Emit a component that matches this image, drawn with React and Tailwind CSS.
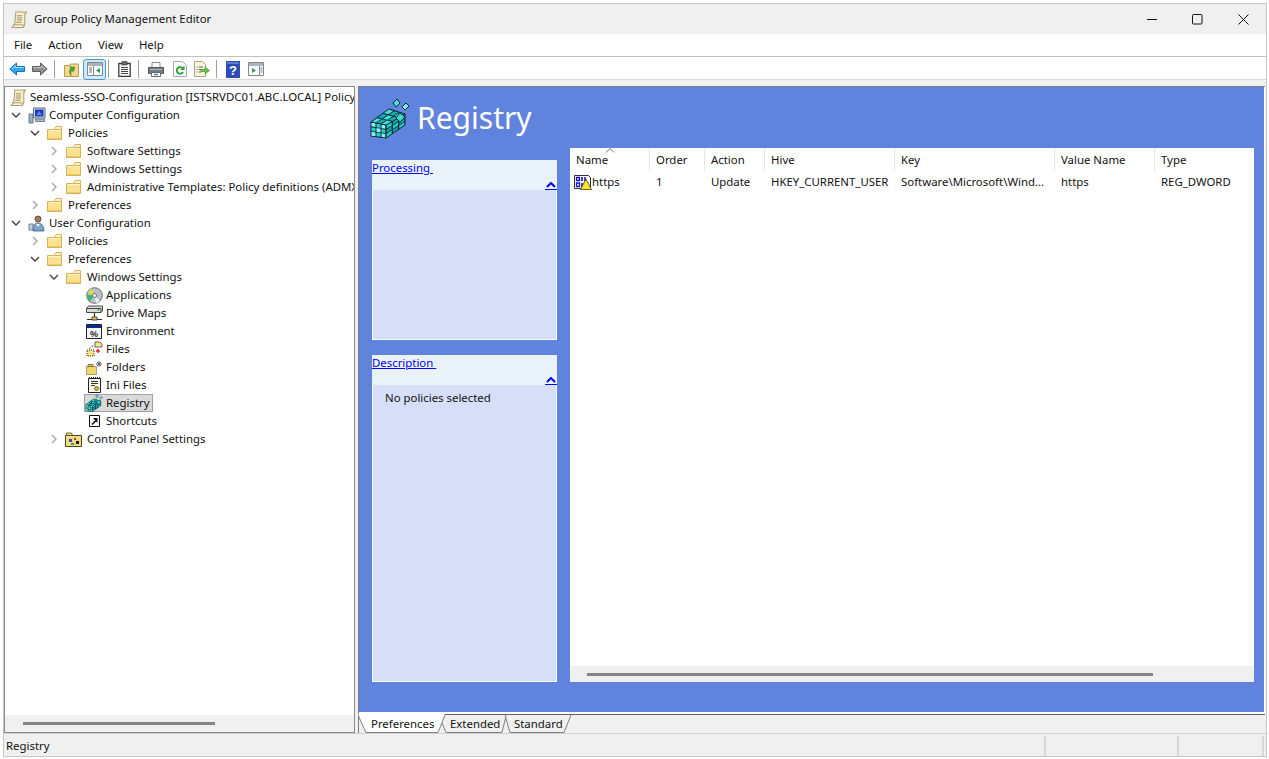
const FONT = "font-['Noto_Sans','Open_Sans',sans-serif]";

function Folder() {
  return (
    <svg width="15" height="14" viewBox="0 0 15 14" className="-translate-x-[2px]">
      <path d="M.5 3.500h14v10H.5z" fill="#fce28f" stroke="#d6b25c" />
      <path d="M7.500 2.500 9 .5h5.500v3h-7z" fill="#fdf0c4" stroke="#d6b25c" />
      <path d="M1.500 4.500h12" stroke="#fff3cc" />
      <path d="M1 12.500h13" stroke="#eec96c" />
    </svg>
  );
}

function Scroll({ size = 17 }) {
  return (
    <svg width={size} height={size} viewBox="0 0 16 16">
      <path d="M4.500 1h10l-1.500 2.500v9.500l-2 2.500H1l2.500-3z" fill="#fbf0c6" stroke="#ab9f7a" />
      <path d="M11 15.500c1.500-.5 1.500-2 0-2.500H2" fill="none" stroke="#ab9f7a" />
      <path d="M5.500 4.500h5M5.500 6.500h5M5.500 8.500h5M5 10.500h5" stroke="#98916f" />
      <path d="M11.500 1.500c1.500.5 1.500 2 1 2.500" fill="none" stroke="#d8c47e" />
    </svg>
  );
}

function Computer() {
  return (
    <svg width="18" height="17" viewBox="0 0 18 17">
      <path d="M1 7h4v9H1z" fill="#9bb2c4" stroke="#4d6474" strokeWidth=".8" />
      <path d="M5.500 1h11.500v10H5.500z" fill="#d3dbe2" stroke="#5a6b78" />
      <path d="M7 2.500h8.500v7H7z" fill="#1c38c0" />
      <path d="M8 8l3-4 3 4z" fill="#5f86ee" />
      <path d="M7.500 12h9v2.500h-9z" fill="#aebdc9" stroke="#5a6b78" strokeWidth=".8" />
    </svg>
  );
}

function UserIcon() {
  return (
    <svg width="18" height="17" viewBox="0 0 18 17">
      <circle cx="10" cy="4" r="3" fill="#a87a58" stroke="#4d3a30" strokeWidth=".8" />
      <path d="M5 16c-.5-5 1.500-8 5-8s6 3 6 8z" fill="#7aa4cc" stroke="#41607c" strokeWidth=".8" />
      <path d="M1 9h4v6H1z" fill="#c5d3de" stroke="#52697c" strokeWidth=".8" />
      <path d="M8 9l2 3 2-3" fill="#f4f7fa" />
    </svg>
  );
}

function Disc() {
  return (
    <svg width="17" height="17" viewBox="0 0 17 17">
      <circle cx="8.500" cy="8.500" r="7.800" fill="#b9bfc2" stroke="#6a7074" />
      <path d="M8.500 8.500 2 5a7.500 7.500 0 0 1 4-3.500z" fill="#d8e04a" />
      <path d="M8.500 8.500 4 14a7.500 7.500 0 0 1-3-6z" fill="#39b66a" />
      <path d="M8.500 8.500 14 14a7.500 7.500 0 0 1-4 2z" fill="#e9eef0" />
      <circle cx="8.500" cy="8.500" r="2" fill="#fff" stroke="#555" strokeWidth=".8" />
    </svg>
  );
}

function DriveMap() {
  return (
    <svg width="17" height="16" viewBox="0 0 17 16">
      <path d="M.5 3.500 2.500 1h14v5l-1.500 1.500H.5z" fill="#d8d8d8" stroke="#4a4a4a" />
      <path d="M.5 3.500H15V7.500" fill="none" stroke="#4a4a4a" />
      <path d="M11.500 5h2" stroke="#23b04c" strokeWidth="1.400" />
      <path d="M8.500 8v4M1 14.500h15" stroke="#333" strokeWidth="1.200" />
      <path d="M6 12h5v3H6z" fill="#e0c040" stroke="#333" strokeWidth=".8" />
    </svg>
  );
}

function EnvIcon() {
  return (
    <svg width="16" height="15" viewBox="0 0 16 15">
      <path d="M.5.500h15v14H.5z" fill="#f6f6f6" stroke="#222" />
      <path d="M1 1h14v3H1z" fill="#0c2a8c" />
      <text x="8" y="12.500" textAnchor="middle" fontSize="9" fontWeight="700" fill="#222" fontFamily="Liberation Sans">%</text>
    </svg>
  );
}

function FilesIcon() {
  return (
    <svg width="18" height="16" viewBox="0 0 18 16">
      <path d="M10 1h5l2 2v3h-7z" fill="#f7e58a" stroke="#444" strokeWidth=".8" />
      <path d="M2 9h7v6H2z" fill="#f4e27a" stroke="#333" strokeDasharray="1 1" />
      <path d="M4 8l5-4" stroke="#333" strokeDasharray="1 1" />
      <path d="M11 10h4M13 8v4" stroke="#e8202c" strokeWidth="1.400" />
    </svg>
  );
}

function FoldersIcon() {
  return (
    <svg width="17" height="15" viewBox="0 0 17 15">
      <path d="M.5 6.500h10v8H.5z" fill="#ecd768" stroke="#5f5a30" strokeDasharray="1 1" />
      <path d="M2 4.500h5v2H2z" fill="#ecd768" stroke="#5f5a30" strokeWidth=".8" />
      <path d="M13 1v6M10 4h6M11 2l4 4M15 2l-4 4" stroke="#555" strokeWidth=".9" />
    </svg>
  );
}

function IniIcon() {
  return (
    <svg width="13" height="16" viewBox="0 0 13 16">
      <path d="M.5 1.500h12v14H.5z" fill="#fbfbf0" stroke="#222" />
      <path d="M1 .500h11" stroke="#222" strokeDasharray="1 1" />
      <path d="M3 4.500h7M3 6.500h7M3 8.500h4" stroke="#333" />
      <circle cx="8.500" cy="11.500" r="2" fill="#d6b422" stroke="#554a10" strokeWidth=".7" />
    </svg>
  );
}

function ShortcutIcon() {
  return (
    <svg width="11" height="12" viewBox="0 0 11 12">
      <path d="M.5.500h10v11H.5z" fill="#fff" stroke="#111" />
      <path d="M3 9.500 7 5.500" stroke="#111" strokeWidth="1.600" />
      <path d="M4 3h4.500v5z" fill="#111" />
    </svg>
  );
}

function ControlPanel() {
  return (
    <svg width="17" height="15" viewBox="0 0 17 15" className="-translate-x-[2px]">
      <path d="M.5 3.500h16v11H.5z" fill="#f1dc82" stroke="#4a4420" />
      <path d="M1.500 1h5l1 2.500h-6z" fill="#f1dc82" stroke="#4a4420" strokeWidth=".8" />
      <path d="M4 7h3v3H4z" fill="#2f49b8" />
      <path d="M9 6h2v2H9z" fill="#c8332a" />
      <path d="M11 9h3v3h-3z" fill="#1f1f1f" />
      <path d="M6 11h3v2H6z" fill="#3aa04a" />
    </svg>
  );
}

// one face of the registry cube, split in n x n little tiles
function Face({ pts, n = 3, a, b }) {
  const lerp = (p, q, t) => [p[0] + (q[0] - p[0]) * t, p[1] + (q[1] - p[1]) * t];
  const at = (u, v) => lerp(lerp(pts[0], pts[1], u), lerp(pts[3], pts[2], u), v);
  const tiles = [];
  for (let i = 0; i < n; i++) {
    for (let j = 0; j < n; j++) {
      const g = 0.09;
      const c = [at((i + g) / n, (j + g) / n), at((i + 1 - g) / n, (j + g) / n), at((i + 1 - g) / n, (j + 1 - g) / n), at((i + g) / n, (j + 1 - g) / n)];
      tiles.push(<polygon key={`${i}-${j}`} points={c.map((p) => p.join(",")).join(" ")} fill={(i + j) % 2 ? a : b} />);
    }
  }
  return (
    <g>
      <polygon points={pts.map((p) => p.join(",")).join(" ")} fill="#06242a" stroke="#06242a" strokeWidth="1" />
      {tiles}
    </g>
  );
}

function RegistryCube({ size = 41 }) {
  return (
    <svg width={size} height={size} viewBox="0 0 41 41">
      <Face pts={[[2, 24], [17, 27], [17, 40], [2, 38]]} a="#22cfd0" b="#8eeeee" />
      <Face pts={[[17, 27], [36, 16], [36, 27], [17, 40]]} a="#0f9ca2" b="#2cc6ca" />
      <Face pts={[[2, 24], [20, 11], [36, 16], [17, 27]]} a="#14a9ae" b="#4bdcdc" />
      <polygon points="24,5 28,1 31,5 27,9" fill="#4fdede" stroke="#0b2b30" />
      <polygon points="33,9 37,5 40,8 36,12" fill="#7ceaea" stroke="#0b2b30" />
      <polygon points="27,20 31,15 36,19 31,24" fill="#3fd8d8" stroke="#0b2b30" />
    </svg>
  );
}

function RegValueIcon() {
  return (
    <svg width="18" height="17" viewBox="0 0 18 17">
      <path d="M.5 1.500h14l2 2v11H.5z" fill="#fff" stroke="#333" />
      <path d="M2.500 3.500h3v3h-3zM2.500 9h3v3.500h-3z" fill="none" stroke="#1414c8" strokeWidth="1.300" />
      <path d="M8 3v4M11 3v4M8 9v4" stroke="#1414c8" strokeWidth="1.600" />
      <path d="M12 5 17.500 15.500H6.500z" fill="#ffe81a" stroke="#222" strokeWidth=".7" />
    </svg>
  );
}

function ToolIcon({ name }) {
  if (name === "back" || name === "forward") {
    const blue = name === "back";
    return (
      <svg width="16" height="14" viewBox="0 0 16 14" className={blue ? "" : "-scale-x-100"}>
        <path d="M.8 7 7.500 1v3.500h8v5h-8V13z" fill={blue ? "#35a5ee" : "#8f8f8f"} stroke={blue ? "#1470b8" : "#5e5e5e"} />
        <path d="M3 7l3.500-3v1.500h8" fill="none" stroke={blue ? "#a6dcfb" : "#c4c4c4"} />
      </svg>
    );
  }
  if (name === "up") {
    return (
      <svg width="15" height="15" viewBox="0 0 15 15">
        <path d="M.5 3.500h5l1-1.500h8v12.500H.5z" fill="#f6d98a" stroke="#b59a55" />
        <path d="M4 12c0-4 2-5.500 4-6V4l4 3.500-4 2.500V8c-2 .5-3 2-4 4z" fill="#4caf3c" stroke="#2d7d27" strokeWidth=".6" transform="rotate(-35 8 8)" />
      </svg>
    );
  }
  if (name === "tree" || name === "pane") {
    const isTree = name === "tree";
    return (
      <svg width="16" height="14" viewBox="0 0 16 14">
        <path d="M.5.500h15v13H.5z" fill="#fff" stroke="#7e8a93" />
        <path d="M1 1h14v3H1z" fill="#aab4bc" />
        {isTree ? (
          <>
            <path d="M2 6h3M2 8h3M2 10h3" stroke="#6d7a85" />
            <path d="M6.500 4v9.500" stroke="#7e8a93" />
            <path d="M13 6v5L9 8.500z" fill="#2aa05a" />
          </>
        ) : (
          <>
            <path d="M11.500 4v9.500" stroke="#7e8a93" />
            <path d="M12.500 6h2M12.500 8h2M12.500 10h2" stroke="#6d7a85" />
            <path d="M4 6v5l4-2.500z" fill="#2aa05a" />
          </>
        )}
      </svg>
    );
  }
  if (name === "clip") {
    return (
      <svg width="13" height="16" viewBox="0 0 13 16">
        <path d="M.8 2.500h11.400v13H.8z" fill="#fff" stroke="#3c3c3c" strokeWidth="1.300" />
        <path d="M4 .8h5v3H4z" fill="#777" stroke="#3c3c3c" />
        <path d="M3 6.500h7M3 8.500h7M3 10.500h7M3 12.500h7" stroke="#444" />
      </svg>
    );
  }
  if (name === "print") {
    return (
      <svg width="16" height="15" viewBox="0 0 16 15">
        <path d="M4 .500h8v5H4z" fill="#fff" stroke="#8a8a8a" />
        <path d="M.5 5.500h15v6H.5z" fill="#757b80" stroke="#54585c" />
        <path d="M2 7.500h12" stroke="#aeb3b7" />
        <path d="M3.500 10.500h9v4h-9z" fill="#fff" stroke="#6a6a6a" />
        <path d="M6 12.500h4" stroke="#3c8fd8" strokeWidth="1.600" />
      </svg>
    );
  }
  if (name === "refresh") {
    return (
      <svg width="14" height="16" viewBox="0 0 14 16">
        <path d="M.5.500h9l4 4v11H.5z" fill="#fff" stroke="#a8a8a8" />
        <path d="M9.800 7.500A3.300 3.300 0 1 0 10 11" fill="none" stroke="#2ea43c" strokeWidth="2" />
        <path d="M11.500 4.500v4.500h-4.500z" fill="#2ea43c" />
      </svg>
    );
  }
  if (name === "export") {
    return (
      <svg width="16" height="16" viewBox="0 0 16 16">
        <path d="M.5.500h8l3 3v12H.5z" fill="#fdf8dc" stroke="#a8a28a" />
        <path d="M2.500 6h1M5 6h4M2.500 8.500h1M5 8.500h2M2.500 11h1M5 11h2" stroke="#555" />
        <path d="M7 8.500h4V6l4.500 3.500-4.500 3.500v-2.500H7z" fill="#68bf3f" stroke="#3a8f2a" strokeWidth=".6" />
      </svg>
    );
  }
  return (
    <svg width="14" height="17" viewBox="0 0 14 17">
      <path d="M0 0h14v17H0z" fill="#2d4db4" />
      <path d="M1 1h12v2H1z" fill="#5d78cc" />
      <text x="7" y="14" textAnchor="middle" fontSize="13" fontWeight="700" fill="#fff" fontFamily="Liberation Sans">?</text>
    </svg>
  );
}

function Chevron({ open }) {
  return (
    <svg width="10" height="10" viewBox="0 0 10 10">
      {open ? (
        <path d="M1 3l4 4 4-4" fill="none" stroke="#404040" strokeWidth="1.400" />
      ) : (
        <path d="M3 1l4 4-4 4" fill="none" stroke="#a6a6a6" strokeWidth="1.400" />
      )}
    </svg>
  );
}

const tree = [
  { level: 0, icon: <Scroll />, label: "Seamless-SSO-Configuration [ISTSRVDC01.ABC.LOCAL] Policy" },
  { level: 1, open: true, icon: <Computer />, label: "Computer Configuration" },
  { level: 2, open: true, icon: <Folder />, label: "Policies" },
  { level: 3, open: false, icon: <Folder />, label: "Software Settings" },
  { level: 3, open: false, icon: <Folder />, label: "Windows Settings" },
  { level: 3, open: false, icon: <Folder />, label: "Administrative Templates: Policy definitions (ADMX files)" },
  { level: 2, open: false, icon: <Folder />, label: "Preferences" },
  { level: 1, open: true, icon: <UserIcon />, label: "User Configuration" },
  { level: 2, open: false, icon: <Folder />, label: "Policies" },
  { level: 2, open: true, icon: <Folder />, label: "Preferences" },
  { level: 3, open: true, icon: <Folder />, label: "Windows Settings" },
  { level: 4, icon: <Disc />, label: "Applications" },
  { level: 4, icon: <DriveMap />, label: "Drive Maps" },
  { level: 4, icon: <EnvIcon />, label: "Environment" },
  { level: 4, icon: <FilesIcon />, label: "Files" },
  { level: 4, icon: <FoldersIcon />, label: "Folders" },
  { level: 4, icon: <IniIcon />, label: "Ini Files" },
  { level: 4, icon: <RegistryCube size={18} />, label: "Registry", selected: true },
  { level: 4, icon: <ShortcutIcon />, label: "Shortcuts" },
  { level: 3, open: false, icon: <ControlPanel />, label: "Control Panel Settings" },
];

const rowIndent = ["pl-[3px]", "pl-[6px]", "pl-[25px]", "pl-[44px]", "pl-[63px]"];

function TreeRow({ row }) {
  return (
    <div className={`flex h-[18px] shrink-0 items-center whitespace-nowrap ${rowIndent[row.level]}`}>
      {row.level > 0 && (
        <span className="flex w-[16px] shrink-0 items-center">
          {row.open !== undefined && <Chevron open={row.open} />}
        </span>
      )}
      <span
        className={`flex h-[18px] items-center pr-[2px] ${
          row.selected ? "border border-[#a0a0a0] bg-[#d9d9d9]" : "border border-transparent"
        }`}
      >
        <span className="-ml-[1px] flex w-[20px] shrink-0 items-center justify-center">{row.icon}</span>
        <span className="ml-[2px]">{row.label}</span>
      </span>
    </div>
  );
}

function Section({ title, bodyClass, children }) {
  return (
    <div className="flex flex-col">
      <div className="relative h-[30px] bg-[#eaf2f9]">
        <span className="whitespace-pre text-[#0000ff] underline">{title} </span>
        <span className="absolute right-0 bottom-0 flex w-[12px] justify-center border-b border-[#0000ff] pb-[1px]">
          <svg width="10" height="6" viewBox="0 0 10 6">
            <path d="M1 5l4-4 4 4" fill="none" stroke="#0000ff" strokeWidth="2" />
          </svg>
        </span>
      </div>
      <div className={`border-x border-b border-white bg-[#d6dff7] ${bodyClass}`}>{children}</div>
    </div>
  );
}

const columns = [
  { label: "Name", w: "w-[80px]" },
  { label: "Order", value: "1", w: "w-[55px]" },
  { label: "Action", value: "Update", w: "w-[60px]" },
  { label: "Hive", value: "HKEY_CURRENT_USER", w: "w-[130px]" },
  { label: "Key", value: "Software\\Microsoft\\Wind...", w: "w-[160px]" },
  { label: "Value Name", value: "https", w: "w-[100px]" },
  { label: "Type", value: "REG_DWORD", w: "w-[99px]" },
];

const menus = ["File", "Action", "View", "Help"];

function Sep() {
  return <span className="block h-[18px] w-px bg-[#a0a0a0]" />;
}

export default function App() {
  return (
    <div className={`h-[759px] w-[1269px] overflow-hidden bg-white pt-[3px] pl-[3px] text-[11.4px] leading-[16px] text-[#111] ${FONT}`}>
      <div className="flex h-[754px] w-[1264px] flex-col border border-[#c6c6c6]">
        <div className="flex h-[30px] shrink-0 items-center bg-[#f0f0f0]">
          <span className="ml-[7px] flex w-[23px] justify-start"><Scroll /></span>
          <span>Group Policy Management Editor</span>
          <div className="ml-auto flex">
            <span className="flex h-[30px] w-[45px] items-center justify-center">
              <svg width="11" height="11" viewBox="0 0 11 11"><path d="M0 5.500h10" stroke="#111" /></svg>
            </span>
            <span className="flex h-[30px] w-[45px] items-center justify-center">
              <svg width="11" height="11" viewBox="0 0 11 11"><rect x=".5" y=".5" width="9.500" height="9.500" rx="1" fill="none" stroke="#111" /></svg>
            </span>
            <span className="flex h-[30px] w-[46px] items-center justify-center">
              <svg width="11" height="11" viewBox="0 0 11 11"><path d="M.5.500l10 10M10.500.500l-10 10" stroke="#111" /></svg>
            </span>
          </div>
        </div>

        <div className="flex h-[23px] shrink-0 items-center gap-[16px] border-b border-[#c0c0c0] bg-white pl-[10px]">
          {menus.map((m) => (
            <span key={m}>{m}</span>
          ))}
        </div>

        <div className="flex h-[23px] shrink-0 items-center border-b border-[#d8d8d8] bg-white pt-[2px] pl-[5px]">
          <ToolIcon name="back" />
          <span className="ml-[7px]"><ToolIcon name="forward" /></span>
          <span className="ml-[6px]"><Sep /></span>
          <span className="ml-[9px]"><ToolIcon name="up" /></span>
          <span className="ml-[4px] flex h-[21px] w-[23px] items-center justify-center rounded-[3px] border border-[#3f9be0] bg-[#d4e8f8]">
            <ToolIcon name="tree" />
          </span>
          <span className="ml-[2px]"><Sep /></span>
          <span className="ml-[9px]"><ToolIcon name="clip" /></span>
          <span className="ml-[7px]"><Sep /></span>
          <span className="ml-[9px]"><ToolIcon name="print" /></span>
          <span className="ml-[9px]"><ToolIcon name="refresh" /></span>
          <span className="ml-[7px]"><ToolIcon name="export" /></span>
          <span className="ml-[6px]"><Sep /></span>
          <span className="ml-[9px]"><ToolIcon name="help" /></span>
          <span className="ml-[8px]"><ToolIcon name="pane" /></span>
        </div>

        <div className="h-[6px] shrink-0 bg-[#f0f0f0]" />

        <div className="flex h-[647px] shrink-0 bg-[#f0f0f0]">
          <div className="flex w-[351px] shrink-0 flex-col border border-[#8c8c8c] bg-white">
            <div className="flex h-[628px] flex-col overflow-hidden pt-[1px]">
              {tree.map((row, i) => (
                <TreeRow key={i} row={row} />
              ))}
            </div>
            <div className="flex flex-1 items-center bg-[#f0f0f0] pl-[18px]">
              <div className="h-[3px] w-[192px] bg-[#858585]" />
            </div>
          </div>

          <div className="ml-[3px] flex w-[907px] shrink-0 flex-col border-t border-l border-[#808080]">
            <div className="flex h-[625px] shrink-0 flex-col border-r border-white bg-[#6083de] pl-[13px]">
              <div className="flex h-[61px] shrink-0 items-start">
                <span className="-ml-[3px] mt-[11px]"><RegistryCube /></span>
                <span className="ml-[7px] mt-[9px] text-[30px] leading-[44px] text-white">Registry</span>
              </div>
              <div className="flex">
                <div className="w-[185px] shrink-0 pt-[12px]">
                  <Section title="Processing" bodyClass="h-[150px]" />
                  <div className="h-[15px]" />
                  <Section title="Description" bodyClass="h-[297px]">
                    <p className="pt-[5px] pl-[12px]">No policies selected</p>
                  </Section>
                </div>
                <div className="ml-[13px] flex h-[534px] w-[684px] flex-col bg-white">
                  <div className="relative flex h-[23px] shrink-0">
                    {columns.map((c, i) => (
                      <div key={c.label} className={`${c.w} flex shrink-0 items-center pt-[1px] pl-[6px] ${i < columns.length - 1 ? "border-r border-[#e5e5e5]" : ""}`}>
                        {c.label}
                      </div>
                    ))}
                    <svg width="10" height="5" viewBox="0 0 10 5" className="absolute top-0 left-[35px]">
                      <path d="M1 4.500l4-4 4 4" fill="none" stroke="#777" />
                    </svg>
                  </div>
                  <div className="flex h-[22px] shrink-0 items-center">
                    <div className="flex w-[80px] shrink-0 items-center pl-[4px]">
                      <RegValueIcon />
                      <span>https</span>
                    </div>
                    {columns.slice(1).map((c) => (
                      <div key={c.label} className={`${c.w} shrink-0 overflow-hidden pl-[6px] whitespace-nowrap`}>{c.value}</div>
                    ))}
                  </div>
                  <div className="flex-1" />
                  <div className="flex h-[16px] shrink-0 items-center bg-[#f0f0f0] pl-[17px]">
                    <div className="h-[3px] w-[566px] bg-[#858585]" />
                  </div>
                </div>
              </div>
            </div>
            <div className="h-[2px] shrink-0 bg-white" />
            <div className="relative flex-1 border-t border-[#606060]">
              <svg width="220" height="20" viewBox="0 -1 220 20" className="absolute -top-[1px] left-[-1px]">
                <path d="M147 0 L152 17.500 H206 L213 0" fill="#f0f0f0" stroke="#808080" />
                <path d="M84 8 L88 17.500 H144 L148 1" fill="#f0f0f0" stroke="#808080" />
                <path d="M0 -1 L8 17.500 H80 L87 -1 z" fill="#fff" />
                <path d="M0 0 L8 17.500 H80 L87 0" fill="none" stroke="#808080" />
              </svg>
              <div className="relative flex h-[18px] items-center pl-[12px]">
                <span className="w-[79px]">Preferences</span>
                <span className="w-[64px]">Extended</span>
                <span>Standard</span>
              </div>
            </div>
          </div>
        </div>

        <div className="flex flex-1 items-center border-t border-[#d0d0d0] bg-[#f0f0f0] pt-[1px] pl-[2px]">
          <span>Registry</span>
          <div className="mr-[2px] ml-auto flex h-[20px]">
            <div className="w-[133px] border-l-2 border-[#d8d8d8]" />
            <div className="w-[85px] border-l-2 border-[#d8d8d8]" />
            <div className="w-[2px] border-l-2 border-[#d8d8d8]" />
          </div>
        </div>
      </div>
    </div>
  );
}
